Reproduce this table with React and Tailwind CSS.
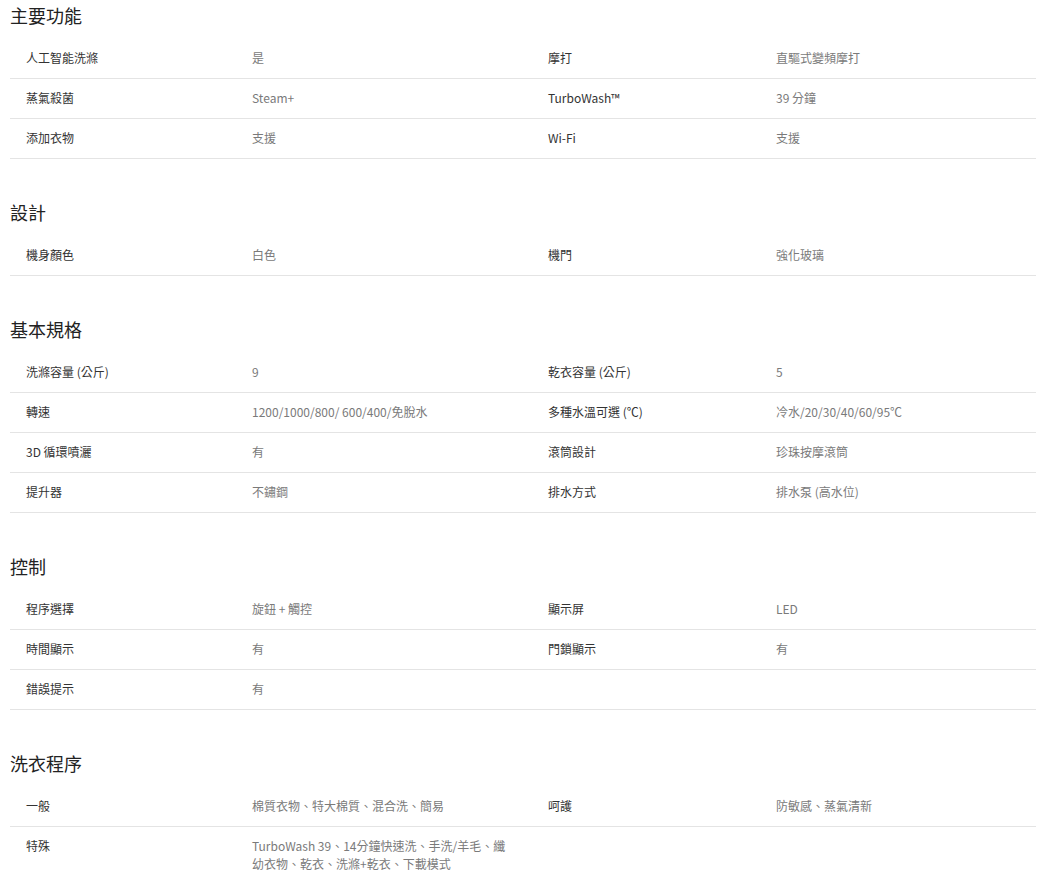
const sections = [
  {
    title: '主要功能',
    rows: [
      ['人工智能洗滌', '是', '摩打', '直驅式變頻摩打'],
      ['蒸氣殺菌', 'Steam+', 'TurboWash™', '39 分鐘'],
      ['添加衣物', '支援', 'Wi-Fi', '支援'],
    ],
  },
  {
    title: '設計',
    rows: [['機身顏色', '白色', '機門', '強化玻璃']],
  },
  {
    title: '基本規格',
    rows: [
      ['洗滌容量 (公斤)', '9', '乾衣容量 (公斤)', '5'],
      ['轉速', '1200/1000/800/ 600/400/免脫水', '多種水溫可選 (℃)', '冷水/20/30/40/60/95℃'],
      ['3D 循環噴灑', '有', '滾筒設計', '珍珠按摩滾筒'],
      ['提升器', '不鏽鋼', '排水方式', '排水泵 (高水位)'],
    ],
  },
  {
    title: '控制',
    rows: [
      ['程序選擇', '旋鈕 + 觸控', '顯示屏', 'LED'],
      ['時間顯示', '有', '門鎖顯示', '有'],
      ['錯誤提示', '有', '', ''],
    ],
  },
  {
    title: '洗衣程序',
    rows: [
      ['一般', '棉質衣物、特大棉質、混合洗、簡易', '呵護', '防敏感、蒸氣清新'],
      ['特殊', 'TurboWash 39、14分鐘快速洗、手洗/羊毛、纖幼衣物、乾衣、洗滌+乾衣、下載模式', '', ''],
    ],
  },
];

function Cell({ label, value, right }) {
  return (
    <div
      className={
        'flex items-start border-b border-[#e4e4e4] pt-[10px] pb-[11px] text-[12px] leading-[18px] ' +
        (right ? 'pl-[25px]' : 'pl-4')
      }
    >
      <div className={(right ? 'w-[228px]' : 'w-[226px]') + ' shrink-0 text-[#333]'}>{label}</div>
      <div className="flex-1 pr-[10px] text-[#7a7a7a]">{value}</div>
    </div>
  );
}

export default function App() {
  return (
    <div
      className="min-h-screen bg-white px-[10px] pr-[24px]"
      style={{ fontFamily: '"Noto Sans CJK TC", "Noto Sans", sans-serif' }}
    >
      {sections.map((s, i) => (
        <section key={s.title} className={i === 0 ? '' : 'mt-[38px]'}>
          <h2 className="h-[30px] text-[18px] leading-[30px] text-[#222]">{s.title}</h2>
          <div className="mt-[9px] grid grid-cols-2">
            {s.rows.map((r, j) => [
              <Cell key={j + 'a'} label={r[0]} value={r[1]} />,
              <Cell key={j + 'b'} label={r[2]} value={r[3]} right />,
            ])}
          </div>
        </section>
      ))}
    </div>
  );
}
